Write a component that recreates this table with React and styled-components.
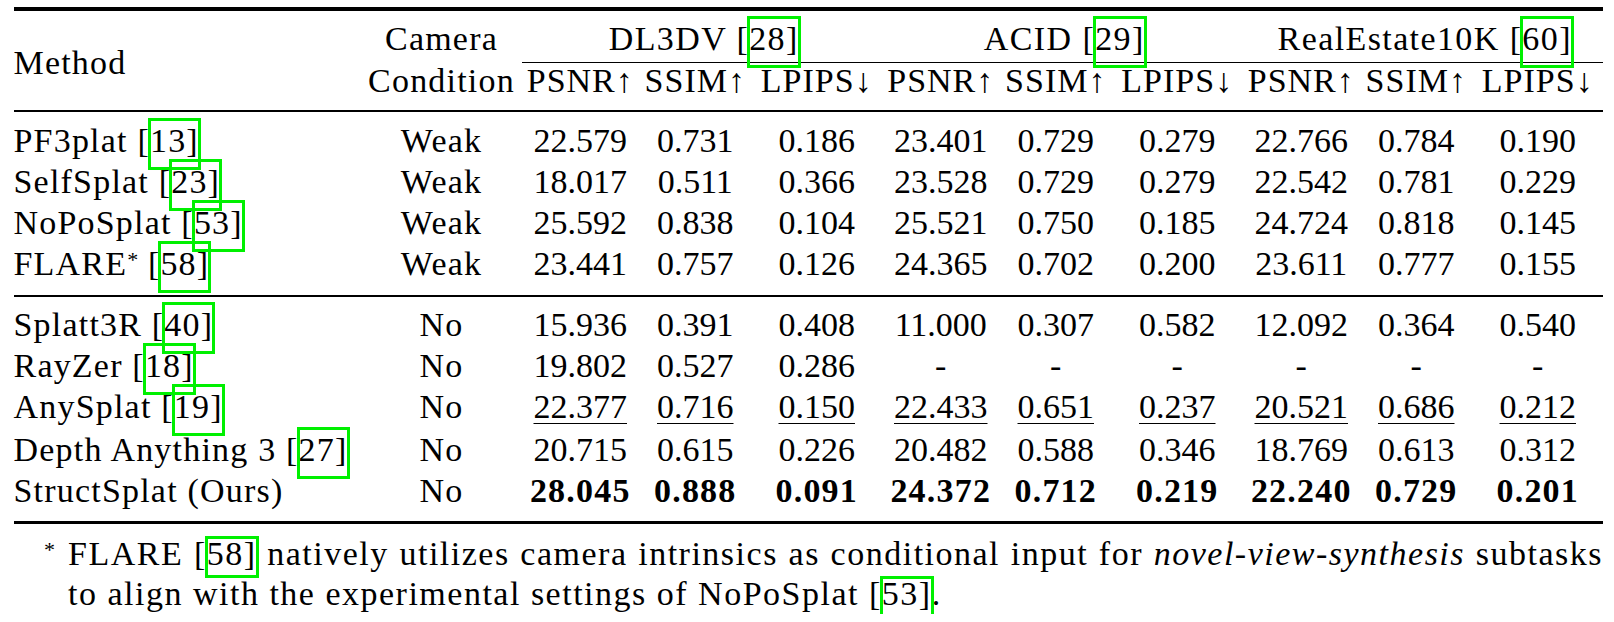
import React from "react";
import styled, { createGlobalStyle, css } from "styled-components";

const COLS = "348px 160px repeat(3, 117.5px 112.5px 130.5px)";

const GlobalStyle = createGlobalStyle`
  html, body { margin: 0; padding: 0; background: #ffffff; }
  body {
    font-family: "Liberation Serif", "Times New Roman", serif;
    color: #000000;
    font-size: 34px;
  }
`;

const Page = styled.div`
  padding: 7px 10px 0 13.5px;
`;

const Table = styled.div`
  width: 1589.5px;
`;

const Rule = styled.div`
  height: ${(p) => p.$weight}px;
  background: #000;
  margin-top: ${(p) => p.$above || 0}px;
  margin-bottom: ${(p) => p.$below || 0}px;
`;

const HeaderGrid = styled.div`
  display: grid;
  grid-template-columns: ${COLS};
  grid-template-rows: 45px 35px;
`;

const MethodHead = styled.div`
  grid-column: 1;
  grid-row: 1 / 3;
  padding-top: 24px;
  line-height: 41px;
  letter-spacing: 1.2px;
`;

const CameraHead = styled.div`
  grid-column: 2;
  grid-row: 1 / 3;
  text-align: center;
  line-height: 42px;
  letter-spacing: 1.2px;
`;

const GroupHead = styled.div`
  grid-row: 1;
  grid-column: span 3;
  box-sizing: border-box;
  height: 45px;
  line-height: 41px;
  text-align: center;
  border-bottom: 1.2px solid #000;
  letter-spacing: 1.4px;
  padding-left: 4px;
`;

const MetricHead = styled.div`
  grid-row: 2;
  line-height: 35px;
  text-align: center;
  white-space: nowrap;
  letter-spacing: 1px;
`;

const Row = styled.div`
  display: grid;
  grid-template-columns: ${COLS};
  height: ${(p) => p.$h || 41}px;
  line-height: 41px;
  align-items: start;
`;

const NameCell = styled.div`
  text-align: left;
  white-space: nowrap;
  letter-spacing: 1.2px;
`;

const CondCell = styled.div`
  text-align: center;
  letter-spacing: 1.2px;
`;

const NumCell = styled.div`
  text-align: center;
  white-space: nowrap;
`;

const Num = styled.span`
  ${(p) =>
    p.$underline &&
    css`
      text-decoration: underline;
      text-decoration-thickness: 1.4px;
      text-underline-offset: 5px;
    `}
  ${(p) =>
    p.$bold &&
    css`
      font-weight: 700;
      letter-spacing: 1.2px;
    `}
`;

const Sup = styled.span`
  font-size: 22px;
  line-height: 0;
  vertical-align: 8px;
  letter-spacing: 0;
`;

const CiteBox = styled.span`
  position: relative;
  &::after {
    content: "";
    position: absolute;
    left: -2px;
    right: -2px;
    top: ${(p) => (p.$small ? "1px" : "-4px")};
    bottom: ${(p) => (p.$small ? "-6px" : "-11px")};
    border: 3px solid #00f000;
    pointer-events: none;
  }
`;

const Cite = ({ n, small }) => (
  <>
    [<CiteBox $small={small}>{n}]</CiteBox>
  </>
);

const Note = styled.div`
  display: flex;
  margin-top: 9.5px;
  padding-left: 30.5px;
  width: 1559px;
`;

const Star = styled.div`
  width: 24px;
  flex: none;
  font-size: 22px;
  line-height: 22px;
  padding-top: 5px;
`;

const NoteText = styled.div`
  flex: 1;
  line-height: 40px;
  letter-spacing: 1.5px;
`;

const NoteLine = styled.div`
  text-align: ${(p) => (p.$justify ? "justify" : "left")};
  text-align-last: ${(p) => (p.$justify ? "justify" : "left")};
`;

const Em = styled.i`
  font-style: italic;
`;

const groups = [
  { name: "DL3DV", cite: "28" },
  { name: "ACID", cite: "29" },
  { name: "RealEstate10K", cite: "60" },
];
const metrics = ["PSNR↑", "SSIM↑", "LPIPS↓"];

const weakRows = [
  { name: "PF3plat", cite: "13", cond: "Weak", v: ["22.579", "0.731", "0.186", "23.401", "0.729", "0.279", "22.766", "0.784", "0.190"] },
  { name: "SelfSplat", cite: "23", cond: "Weak", v: ["18.017", "0.511", "0.366", "23.528", "0.729", "0.279", "22.542", "0.781", "0.229"] },
  { name: "NoPoSplat", cite: "53", cond: "Weak", v: ["25.592", "0.838", "0.104", "25.521", "0.750", "0.185", "24.724", "0.818", "0.145"] },
  { name: "FLARE", star: true, cite: "58", cond: "Weak", v: ["23.441", "0.757", "0.126", "24.365", "0.702", "0.200", "23.611", "0.777", "0.155"] },
];

const noRows = [
  { name: "Splatt3R", cite: "40", cond: "No", v: ["15.936", "0.391", "0.408", "11.000", "0.307", "0.582", "12.092", "0.364", "0.540"] },
  { name: "RayZer", cite: "18", cond: "No", v: ["19.802", "0.527", "0.286", "-", "-", "-", "-", "-", "-"] },
  { name: "AnySplat", cite: "19", cond: "No", underline: true, h: 43, v: ["22.377", "0.716", "0.150", "22.433", "0.651", "0.237", "20.521", "0.686", "0.212"] },
  { name: "Depth Anything 3", cite: "27", cond: "No", v: ["20.715", "0.615", "0.226", "20.482", "0.588", "0.346", "18.769", "0.613", "0.312"] },
  { name: "StructSplat (Ours)", cond: "No", bold: true, v: ["28.045", "0.888", "0.091", "24.372", "0.712", "0.219", "22.240", "0.729", "0.201"] },
];

const DataRow = ({ r }) => (
  <Row $h={r.h}>
    <NameCell>
      {r.name}
      {r.star && <Sup>*</Sup>}
      {r.cite && (
        <>
          {" "}
          <Cite n={r.cite} />
        </>
      )}
    </NameCell>
    <CondCell>{r.cond}</CondCell>
    {r.v.map((x, i) => (
      <NumCell key={i}>
        <Num $underline={r.underline} $bold={r.bold}>
          {x}
        </Num>
      </NumCell>
    ))}
  </Row>
);

export default function App() {
  return (
    <>
      <GlobalStyle />
      <Page>
        <Table>
          <Rule $weight={3.5} $below={7.5} />
          <HeaderGrid>
            <MethodHead>Method</MethodHead>
            <CameraHead>
              Camera
              <br />
              Condition
            </CameraHead>
            {groups.map((g) => (
              <GroupHead key={g.name}>
                {g.name} <Cite n={g.cite} />
              </GroupHead>
            ))}
            {groups.map((g) =>
              metrics.map((m) => <MetricHead key={g.name + m}>{m}</MetricHead>)
            )}
          </HeaderGrid>
          <Rule $weight={2} $above={12} $below={8} />
          {weakRows.map((r) => (
            <DataRow key={r.name} r={r} />
          ))}
          <Rule $weight={2} $above={11} $below={7} />
          {noRows.map((r) => (
            <DataRow key={r.name} r={r} />
          ))}
          <Rule $weight={3.5} $above={9.5} />
        </Table>
        <Note>
          <Star>*</Star>
          <NoteText>
            <NoteLine $justify>
              FLARE <Cite n="58" small /> natively utilizes camera intrinsics as conditional input for{" "}
              <Em>novel-view-synthesis</Em> subtasks
            </NoteLine>
            <NoteLine>
              to align with the experimental settings of NoPoSplat <Cite n="53" small />.
            </NoteLine>
          </NoteText>
        </Note>
      </Page>
    </>
  );
}
